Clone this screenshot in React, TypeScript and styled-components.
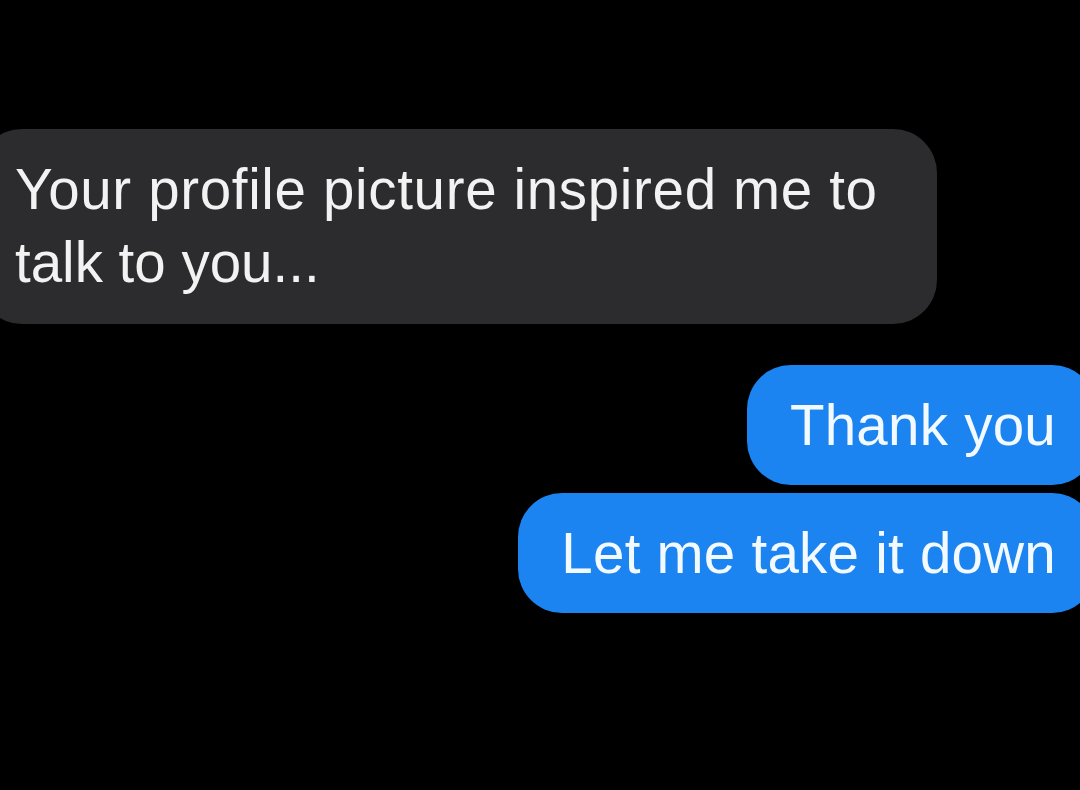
import React from "react";
import styled, { createGlobalStyle } from "styled-components";

const Global = createGlobalStyle`
  html, body {
    margin: 0;
    padding: 0;
    background: #000;
    overflow: hidden;
  }
  #root {
    width: 1080px;
    height: 790px;
  }
`;

const Screen = styled.div`
  width: 1080px;
  height: 790px;
  background: #000;
  display: flex;
  flex-direction: column;
  padding-top: 129px;
  box-sizing: border-box;
  overflow: hidden;
  font-family: "Liberation Sans", Arial, sans-serif;
`;

const Bubble = styled.div<{ $sent?: boolean }>`
  box-sizing: border-box;
  border-radius: 44px;
  font-size: 56.5px;
  line-height: 73px;
  color: ${(p) => (p.$sent ? "#f2f9ff" : "#f2f2f2")};
  background: ${(p) => (p.$sent ? "#1b84f1" : "#2c2c2e")};
  white-space: pre;
  ${(p) =>
    p.$sent
      ? `align-self: flex-end; margin-right: -16px; padding: 23.5px 40px 23.5px 43px; letter-spacing: 0.25px;`
      : `align-self: flex-start; margin-left: -22px; width: 959px; padding: 24px 40px 25px 37px;`}
`;

const Line = styled.span<{ $track: number }>`
  display: block;
  letter-spacing: ${(p) => p.$track}px;
`;

const SentGroup = styled.div`
  display: flex;
  flex-direction: column;
  align-items: flex-end;
  gap: 8px;
  margin-top: 41px;
`;

export default function App() {
  return (
    <>
      <Global />
      <Screen>
        <Bubble>
          <Line $track={0.66}>Your profile picture inspired me to</Line>
          <Line $track={0}>talk to you...</Line>
        </Bubble>
        <SentGroup>
          <Bubble $sent>Thank you</Bubble>
          <Bubble $sent>Let me take it down</Bubble>
        </SentGroup>
      </Screen>
    </>
  );
}
